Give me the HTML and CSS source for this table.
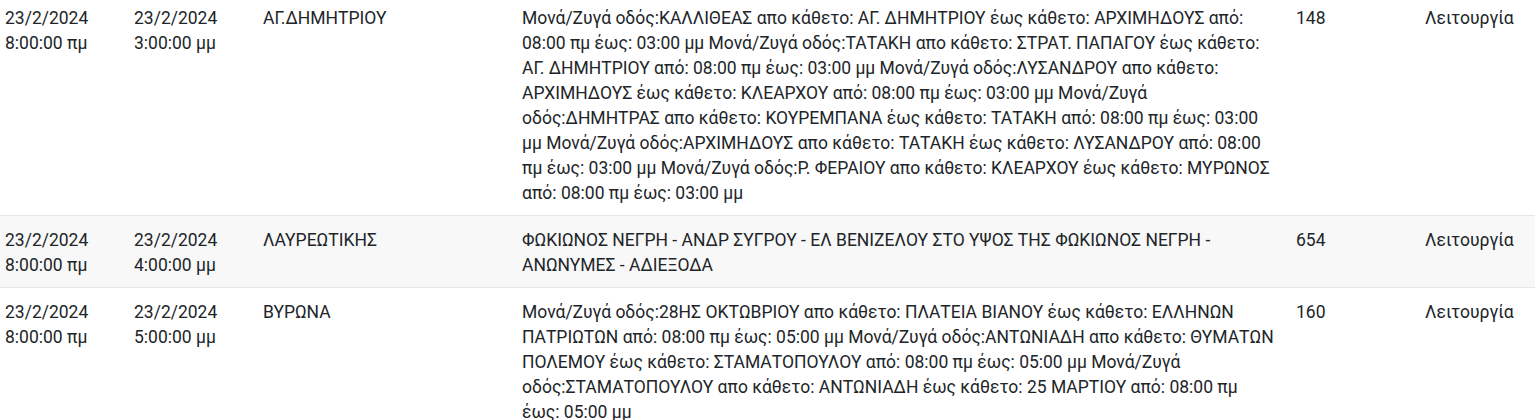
FILE: index.html
```html
<!DOCTYPE html>
<html lang="el">
<head>
  <meta charset="UTF-8">
  <meta name="viewport" content="width=device-width, initial-scale=1.0">
  <title>Διακοπές νερού</title>
  <link rel="stylesheet" href="styles.css">
</head>
<body>
  <table class="outages">
    <colgroup>
      <col class="c-date"><col class="c-date"><col class="c-area">
      <col class="c-desc"><col class="c-num"><col class="c-state">
    </colgroup>
    <tbody>
      <tr>
        <td>23/2/2024 8:00:00 πμ</td>
        <td>23/2/2024 3:00:00 μμ</td>
        <td>ΑΓ.ΔΗΜΗΤΡΙΟΥ</td>
        <td>Μονά/Ζυγά οδός:ΚΑΛΛΙΘΕΑΣ απο κάθετο: ΑΓ. ΔΗΜΗΤΡΙΟΥ έως κάθετο: ΑΡΧΙΜΗΔΟΥΣ από: 08:00 πμ έως: 03:00 μμ Μονά/Ζυγά οδός:ΤΑΤΑΚΗ απο κάθετο: ΣΤΡΑΤ. ΠΑΠΑΓΟΥ έως κάθετο: ΑΓ. ΔΗΜΗΤΡΙΟΥ από: 08:00 πμ έως: 03:00 μμ Μονά/Ζυγά οδός:ΛΥΣΑΝΔΡΟΥ απο κάθετο: ΑΡΧΙΜΗΔΟΥΣ έως κάθετο: ΚΛΕΑΡΧΟΥ από: 08:00 πμ έως: 03:00 μμ Μονά/Ζυγά οδός:ΔΗΜΗΤΡΑΣ απο κάθετο: ΚΟΥΡΕΜΠΑΝΑ έως κάθετο: ΤΑΤΑΚΗ από: 08:00 πμ έως: 03:00 μμ Μονά/Ζυγά οδός:ΑΡΧΙΜΗΔΟΥΣ απο κάθετο: ΤΑΤΑΚΗ έως κάθετο: ΛΥΣΑΝΔΡΟΥ από: 08:00 πμ έως: 03:00 μμ Μονά/Ζυγά οδός:Ρ. ΦΕΡΑΙΟΥ απο κάθετο: ΚΛΕΑΡΧΟΥ έως κάθετο: ΜΥΡΩΝΟΣ από: 08:00 πμ έως: 03:00 μμ</td>
        <td>148</td>
        <td>Λειτουργία</td>
      </tr>
      <tr>
        <td>23/2/2024 8:00:00 πμ</td>
        <td>23/2/2024 4:00:00 μμ</td>
        <td>ΛΑΥΡΕΩΤΙΚΗΣ</td>
        <td>ΦΩΚΙΩΝΟΣ ΝΕΓΡΗ - ΑΝΔΡ ΣΥΓΡΟΥ - ΕΛ ΒΕΝΙΖΕΛΟΥ ΣΤΟ ΥΨΟΣ ΤΗΣ ΦΩΚΙΩΝΟΣ ΝΕΓΡΗ - ΑΝΩΝΥΜΕΣ - ΑΔΙΕΞΟΔΑ</td>
        <td>654</td>
        <td>Λειτουργία</td>
      </tr>
      <tr>
        <td>23/2/2024 8:00:00 πμ</td>
        <td>23/2/2024 5:00:00 μμ</td>
        <td>ΒΥΡΩΝΑ</td>
        <td>Μονά/Ζυγά οδός:28ΗΣ ΟΚΤΩΒΡΙΟΥ απο κάθετο: ΠΛΑΤΕΙΑ ΒΙΑΝΟΥ έως κάθετο: ΕΛΛΗΝΩΝ ΠΑΤΡΙΩΤΩΝ από: 08:00 πμ έως: 05:00 μμ Μονά/Ζυγά οδός:ΑΝΤΩΝΙΑΔΗ απο κάθετο: ΘΥΜΑΤΩΝ ΠΟΛΕΜΟΥ έως κάθετο: ΣΤΑΜΑΤΟΠΟΥΛΟΥ από: 08:00 πμ έως: 05:00 μμ Μονά/Ζυγά οδός:ΣΤΑΜΑΤΟΠΟΥΛΟΥ απο κάθετο: ΑΝΤΩΝΙΑΔΗ έως κάθετο: 25 ΜΑΡΤΙΟΥ από: 08:00 πμ έως: 05:00 μμ</td>
        <td>160</td>
        <td>Λειτουργία</td>
      </tr>
    </tbody>
  </table>
</body>
</html>
```

FILE: styles.css
```css
body {
  margin: 0;
  background: #fff;
  color: #212529;
  font-family: Roboto, "Noto Sans", sans-serif;
  font-size: 17.5px;
  line-height: 25px;
}
.outages {
  width: 100%;
  table-layout: fixed;
  border-collapse: collapse;
  margin-top: -6px;
}
.c-date { width: 129px; }
.c-area { width: 259px; }
.c-desc { width: 774px; }
.c-num { width: 129px; }
.outages td {
  padding: 12px 15px 9px 5px;
  vertical-align: top;
  border-top: 1px solid #e6e6e6;
}
.outages tr:first-child td { border-top: none; }
.outages tr:nth-child(even) td { background: #f8f8f8; }
```
